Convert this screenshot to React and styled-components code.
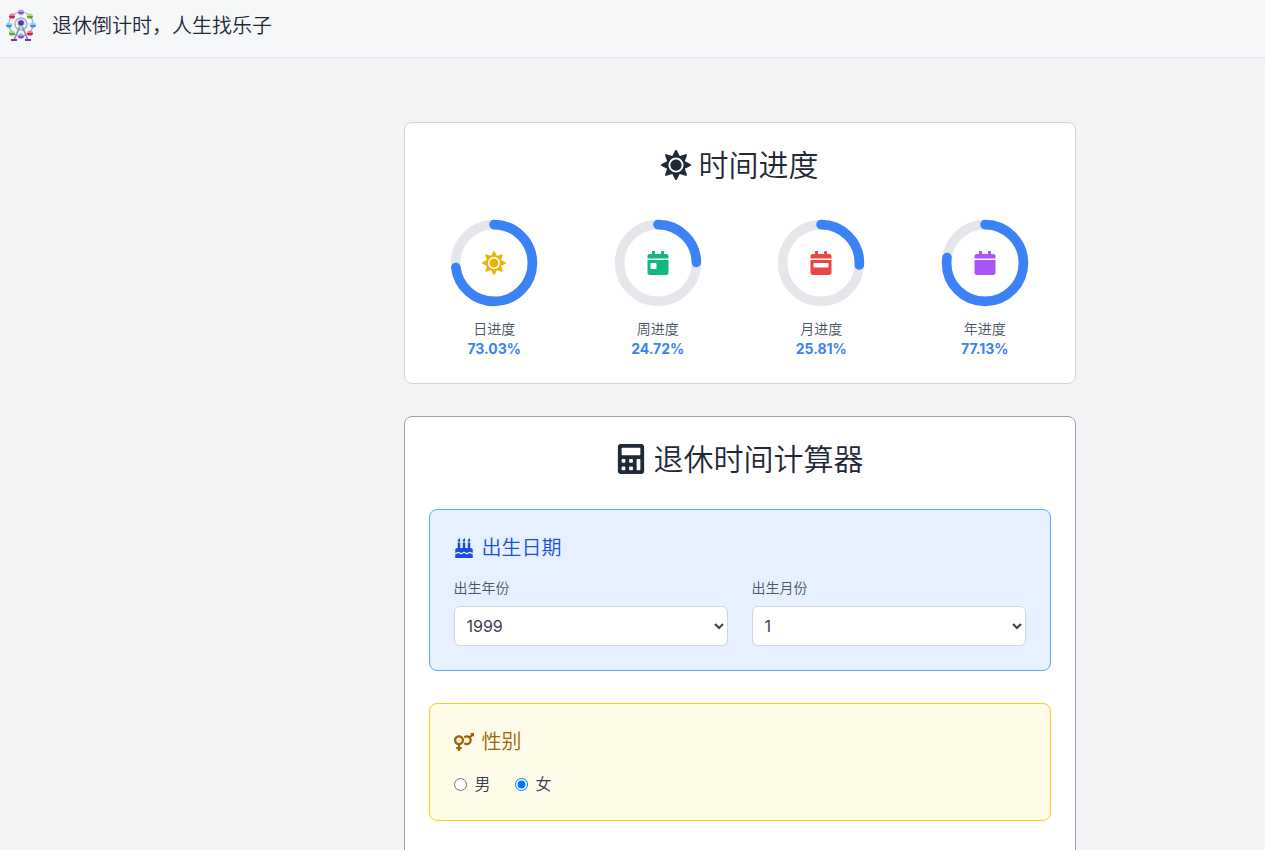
import React, { useState } from "react";
import styled, { createGlobalStyle } from "styled-components";
import {
  FaBirthdayCake,
  FaCalculator,
  FaCalendar,
  FaCalendarDay,
  FaCalendarWeek,
  FaSun,
  FaVenusMars,
} from "react-icons/fa";

const RADIUS = 40;
const CIRCUMFERENCE = 2 * Math.PI * RADIUS;

const progressList = [
  { label: "日进度", value: 73.03, icon: FaSun, color: "#eab308" },
  { label: "周进度", value: 24.72, icon: FaCalendarDay, color: "#10b981" },
  { label: "月进度", value: 25.81, icon: FaCalendarWeek, color: "#ef4444" },
  { label: "年进度", value: 77.13, icon: FaCalendar, color: "#a855f7" },
];

const years = Array.from({ length: 60 }, (_, i) => 1950 + i);
const months = Array.from({ length: 12 }, (_, i) => i + 1);

// x, y, light half, dark half
const cabins = [
  [16, 3, "#b39ddb", "#7e57c2"],
  [25, 7, "#aed581", "#689f38"],
  [28, 16, "#81d4fa", "#3f8fdc"],
  [25, 24, "#f07a9b", "#d81b50"],
  [16, 27, "#b39ddb", "#7e57c2"],
  [7, 24, "#aed581", "#689f38"],
  [4, 16, "#81d4fa", "#3f8fdc"],
  [7, 7, "#f07a9b", "#d81b50"],
];

function FerrisWheel() {
  return (
    <Logo viewBox="0 0 32 32" aria-hidden="true">
      <g fill="none" stroke="#9fb3c3">
        <circle cx="16" cy="15" r="12" strokeWidth="1.2" />
        <circle cx="16" cy="15" r="6" strokeWidth="1.4" />
        <path d="M16 3v24M4 15h24" strokeWidth="0.3" />
      </g>
      <path
        d="M15.500 16L9 31M16.500 16L23 31"
        stroke="#8199a8"
        strokeWidth="1.800"
      />
      {cabins.map(([x, y, light, dark]) => (
        <g key={`${x}-${y}`}>
          <path d={`M${x - 3} ${y}a3 2.600 0 0 1 6 0z`} fill={light} />
          <path d={`M${x - 3} ${y}a3 2.600 0 0 0 6 0z`} fill={dark} />
        </g>
      ))}
      <circle cx="16" cy="14" r="4" fill="#cfd8e3" />
      <circle cx="16" cy="14" r="2.800" fill="#5c3a9c" />
      <path d="M6 30h6v2H6zM20 30h6v2h-6z" fill="#673ab7" />
    </Logo>
  );
}

function ProgressRing({ label, value, icon: Icon, color }) {
  return (
    <ProgressItem>
      <RingBox>
        <Ring viewBox="0 0 100 100" aria-hidden="true">
          <circle cx="50" cy="50" r={RADIUS} stroke="#e5e7eb" />
          <circle
            cx="50"
            cy="50"
            r={RADIUS}
            stroke="#3b82f6"
            strokeLinecap="round"
            strokeDasharray={CIRCUMFERENCE}
            strokeDashoffset={CIRCUMFERENCE * (1 - value / 100)}
          />
        </Ring>
        <RingIcon $color={color}>
          <Icon />
        </RingIcon>
      </RingBox>
      <ProgressLabel>{label}</ProgressLabel>
      <ProgressValue>{value.toFixed(2)}%</ProgressValue>
    </ProgressItem>
  );
}

export default function App() {
  const [year, setYear] = useState(1999);
  const [month, setMonth] = useState(1);
  const [gender, setGender] = useState("female");

  return (
    <>
      <GlobalStyle />
      <Header>
        <FerrisWheel />
        <SiteTitle>退休倒计时，人生找乐子</SiteTitle>
      </Header>
      <Main>
        <Card $border="#d1d5db">
          <CardTitle>
            <FaSun />
            时间进度
          </CardTitle>
          <ProgressGrid>
            {progressList.map((item) => (
              <ProgressRing key={item.label} {...item} />
            ))}
          </ProgressGrid>
        </Card>

        <Card $border="#9ca3af">
          <CardTitle>
            <FaCalculator />
            退休时间计算器
          </CardTitle>
          <Form>
            <Section $background="#e6f0ff" $border="#60a5fa">
              <SectionTitle $color="#1d4ed8">
                <FaBirthdayCake />
                出生日期
              </SectionTitle>
              <FieldGrid>
                <Field>
                  <FieldLabel htmlFor="birth-year">出生年份</FieldLabel>
                  <Select
                    id="birth-year"
                    value={year}
                    onChange={(e) => setYear(Number(e.target.value))}
                  >
                    {years.map((y) => (
                      <option key={y} value={y}>
                        {y}
                      </option>
                    ))}
                  </Select>
                </Field>
                <Field>
                  <FieldLabel htmlFor="birth-month">出生月份</FieldLabel>
                  <Select
                    id="birth-month"
                    value={month}
                    onChange={(e) => setMonth(Number(e.target.value))}
                  >
                    {months.map((m) => (
                      <option key={m} value={m}>
                        {m}
                      </option>
                    ))}
                  </Select>
                </Field>
              </FieldGrid>
            </Section>

            <Section $background="#fefbe8" $border="#facc15">
              <SectionTitle $color="#a16207">
                <FaVenusMars />
                性别
              </SectionTitle>
              <RadioRow>
                <RadioLabel>
                  <Radio
                    name="gender"
                    checked={gender === "male"}
                    onChange={() => setGender("male")}
                  />
                  男
                </RadioLabel>
                <RadioLabel>
                  <Radio
                    name="gender"
                    checked={gender === "female"}
                    onChange={() => setGender("female")}
                  />
                  女
                </RadioLabel>
              </RadioRow>
            </Section>
          </Form>
        </Card>
      </Main>
    </>
  );
}

const GlobalStyle = createGlobalStyle`
  * {
    box-sizing: border-box;
    margin: 0;
  }

  html {
    scrollbar-width: none;
  }

  body {
    background-color: #f3f4f6;
    color: #1f2937;
    font-family: Inter, "Noto Sans CJK SC", sans-serif;
    font-weight: 350;
    font-size: 16px;
    line-height: 24px;
  }

  svg {
    display: block;
    flex: none;
  }
`;

const Header = styled.header`
  display: flex;
  align-items: flex-start;
  gap: 15px;
  height: 58px;
  padding: 9px 5px;
  background-color: #f6f7f9;
  border-bottom: 1px solid #e5e7eb;
`;

const Logo = styled.svg`
  width: 32px;
  height: 32px;
`;

const SiteTitle = styled.h1`
  font-size: 20px;
  font-weight: 350;
  line-height: 34px;
`;

const Main = styled.main`
  display: flex;
  flex-direction: column;
  align-items: center;
  gap: 32px;
  padding: 64px 0 64px 214px;
`;

const Card = styled.section`
  width: 100%;
  max-width: 672px;
  padding: 24px;
  background-color: #ffffff;
  border: 1px solid ${({ $border }) => $border};
  border-radius: 8px;
`;

const CardTitle = styled.h2`
  display: flex;
  justify-content: center;
  align-items: center;
  gap: 8px;
  margin-bottom: 32px;
  font-size: 30px;
  font-weight: 350;
  line-height: 36px;
`;

const ProgressGrid = styled.div`
  display: grid;
  grid-template-columns: repeat(4, 1fr);
  gap: 32px;
`;

const ProgressItem = styled.div`
  display: flex;
  flex-direction: column;
  align-items: center;
  font-size: 14px;
  line-height: 20px;
`;

const RingBox = styled.div`
  display: grid;
  place-items: center;
  margin-bottom: 8px;
`;

const Ring = styled.svg`
  grid-area: 1 / 1;
  width: 96px;
  height: 96px;
  fill: none;
  stroke-width: 10px;
  transform: rotate(-90deg);
`;

const RingIcon = styled.span`
  grid-area: 1 / 1;
  color: ${({ $color }) => $color};
  font-size: 24px;
`;

const ProgressLabel = styled.p`
  color: #4b5563;
`;

const ProgressValue = styled.p`
  color: #3b82f6;
  font-weight: 700;
`;

const Form = styled.form`
  display: flex;
  flex-direction: column;
  gap: 32px;
  padding-bottom: 32px;
`;

const Section = styled.div`
  padding: 24px;
  background-color: ${({ $background }) => $background};
  border: 1px solid ${({ $border }) => $border};
  border-radius: 8px;
`;

const SectionTitle = styled.h3`
  display: flex;
  align-items: center;
  gap: 8px;
  margin-bottom: 16px;
  color: ${({ $color }) => $color};
  font-size: 20px;
  font-weight: 350;
  line-height: 28px;
`;

const FieldGrid = styled.div`
  display: grid;
  grid-template-columns: 1fr 1fr;
  gap: 24px;
`;

const Field = styled.div`
  display: flex;
  flex-direction: column;
  gap: 8px;
`;

const FieldLabel = styled.label`
  color: #4b5563;
  font-size: 14px;
  line-height: 20px;
`;

const Select = styled.select`
  width: 100%;
  height: 40px;
  padding: 8px;
  background-color: #ffffff;
  border: 1px solid #d1d5db;
  border-radius: 6px;
  color: #374151;
  font-family: inherit;
  font-size: 16px;
  font-weight: 400;
`;

const RadioRow = styled.div`
  display: flex;
  gap: 24px;
`;

const RadioLabel = styled.label`
  display: flex;
  align-items: center;
  gap: 8px;
  color: #374151;
`;

const Radio = styled.input.attrs({ type: "radio" })`
  width: 13px;
  height: 13px;
`;
